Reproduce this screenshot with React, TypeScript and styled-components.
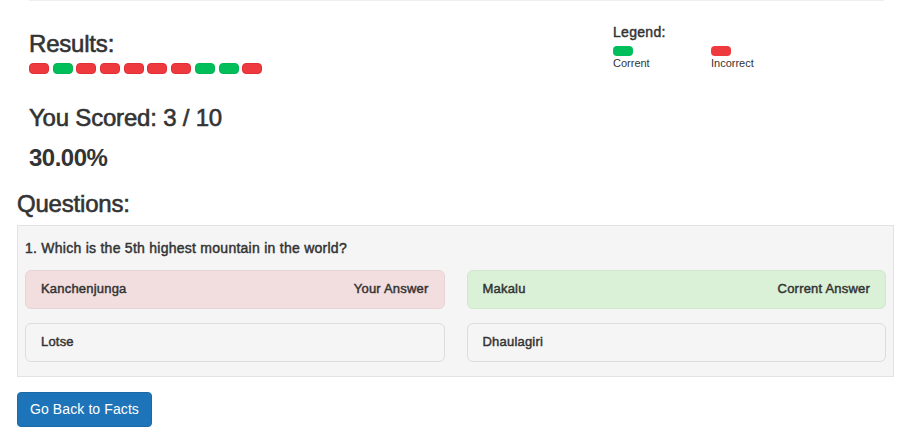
import React from "react";
import styled, { createGlobalStyle } from "styled-components";

const GlobalStyle = createGlobalStyle`
  html, body { margin: 0; padding: 0; background: #ffffff; }
  body {
    font-family: "Liberation Sans", Arial, Helvetica, sans-serif;
    color: #333333;
    font-size: 14px;
    line-height: 1.42857;
  }
  * { box-sizing: border-box; }
`;

const Page = styled.div`
  padding: 0 13px 20px 17px;
`;

const Summary = styled.section`
  margin: 0 10px 0 12px;
  border-top: 1px solid #eeeeee;
  display: grid;
  grid-template-columns: 584px 1fr;
`;

const ResultsColumn = styled.div`
  display: flex;
  flex-direction: column;
  align-items: flex-start;
`;

const Heading = styled.h3<{ $top: number; $bold?: boolean }>`
  margin: ${(p) => p.$top}px 0 0;
  font-size: 24px;
  line-height: 26.4px;
  font-weight: ${(p) => (p.$bold ? 700 : 400)};
  letter-spacing: ${(p) => (p.$bold ? "-0.5px" : "-0.2px")};
  -webkit-text-stroke: ${(p) => (p.$bold ? "0" : "0.6px")} #333333;
  color: #333333;
`;

const DotRow = styled.div`
  display: flex;
  gap: 3.7px;
  margin-top: 5.6px;
`;

const Dot = styled.span<{ $ok: boolean }>`
  display: block;
  width: 20px;
  height: 11px;
  border-radius: 4px;
  background: ${(p) => (p.$ok ? "#00bf5a" : "#ee3a3f")};
  border: 1px solid ${(p) => (p.$ok ? "#00b553" : "#e22f35")};
`;

const Legend = styled.div`
  padding-top: 21px;
`;

const LegendTitle = styled.div`
  font-size: 14px;
  line-height: 20px;
  font-weight: 400;
  letter-spacing: 0.3px;
  -webkit-text-stroke: 0.45px #333333;
`;

const LegendItems = styled.div`
  display: flex;
  margin-top: 4px;
`;

const LegendItem = styled.div`
  width: 98px;
  display: flex;
  flex-direction: column;
  align-items: flex-start;
`;

const Swatch = styled.span<{ $ok: boolean }>`
  display: block;
  width: 20px;
  height: 10px;
  border-radius: 4px;
  background: ${(p) => (p.$ok ? "#00bf5a" : "#ee3a3f")};
`;

const LegendLabel = styled.span`
  font-size: 11px;
  line-height: 13px;
  margin-top: 1.4px;
`;

const QuestionsHeading = styled.h3`
  margin: 19.6px 0 0;
  font-size: 24px;
  line-height: 26.4px;
  font-weight: 400;
  letter-spacing: -0.2px;
  -webkit-text-stroke: 0.6px #333333;
`;

const Well = styled.div`
  margin-top: 8px;
  background: #f5f5f5;
  border: 1px solid #e3e3e3;
  padding: 12px 7px 14px 7px;
`;

const QuestionText = styled.div`
  font-size: 14px;
  line-height: 20px;
  font-weight: 400;
  letter-spacing: 0.26px;
  -webkit-text-stroke: 0.45px #333333;
`;

const AnswerGrid = styled.div`
  margin-top: 12px;
  display: grid;
  grid-template-columns: 1fr 1fr;
  column-gap: 22px;
  row-gap: 14px;
`;

type Tone = "neutral" | "wrong" | "right";

const toneBg: Record<Tone, string> = {
  neutral: "#f5f5f5",
  wrong: "#f2dede",
  right: "#daf1d7",
};
const toneBorder: Record<Tone, string> = {
  neutral: "#dddddd",
  wrong: "#e8d4d6",
  right: "#d2e8cd",
};

const Answer = styled.div<{ $tone: Tone }>`
  height: 39px;
  padding: 0 15px;
  border-radius: 6px;
  border: 1px solid ${(p) => toneBorder[p.$tone]};
  background: ${(p) => toneBg[p.$tone]};
  display: flex;
  align-items: center;
  justify-content: space-between;
  font-size: 13px;
  font-weight: 400;
  letter-spacing: 0.2px;
  -webkit-text-stroke: 0.45px #333333;
  color: #333333;
`;

const Button = styled.button`
  margin-top: 15px;
  height: 35px;
  padding: 0 12px;
  border: 1px solid #1a6aa8;
  border-radius: 4px;
  background: #1e74b8;
  color: #ffffff;
  font-family: "Liberation Sans", Arial, Helvetica, sans-serif;
  font-size: 14px;
  line-height: 20px;
  letter-spacing: 0.1px;
  cursor: pointer;
`;

const results = [false, true, false, false, false, false, false, true, true, false];

const answers: { text: string; tone: Tone; note?: string }[] = [
  { text: "Kanchenjunga", tone: "wrong", note: "Your Answer" },
  { text: "Makalu", tone: "right", note: "Corrent Answer" },
  { text: "Lotse", tone: "neutral" },
  { text: "Dhaulagiri", tone: "neutral" },
];

export default function App() {
  return (
    <>
      <GlobalStyle />
      <Page>
        <Summary>
          <ResultsColumn>
            <Heading $top={30}>Results:</Heading>
            <DotRow>
              {results.map((ok, i) => (
                <Dot key={i} $ok={ok} />
              ))}
            </DotRow>
            <Heading $top={30.5}>You Scored: 3 / 10</Heading>
            <Heading $top={13.6} $bold>
              30.00%
            </Heading>
          </ResultsColumn>
          <Legend>
            <LegendTitle>Legend:</LegendTitle>
            <LegendItems>
              <LegendItem>
                <Swatch $ok />
                <LegendLabel>Corrent</LegendLabel>
              </LegendItem>
              <LegendItem>
                <Swatch $ok={false} />
                <LegendLabel>Incorrect</LegendLabel>
              </LegendItem>
            </LegendItems>
          </Legend>
        </Summary>
        <QuestionsHeading>Questions:</QuestionsHeading>
        <Well>
          <QuestionText>1. Which is the 5th highest mountain in the world?</QuestionText>
          <AnswerGrid>
            {answers.map((a) => (
              <Answer key={a.text} $tone={a.tone}>
                <span>{a.text}</span>
                {a.note && <span>{a.note}</span>}
              </Answer>
            ))}
          </AnswerGrid>
        </Well>
        <Button>Go Back to Facts</Button>
      </Page>
    </>
  );
}
